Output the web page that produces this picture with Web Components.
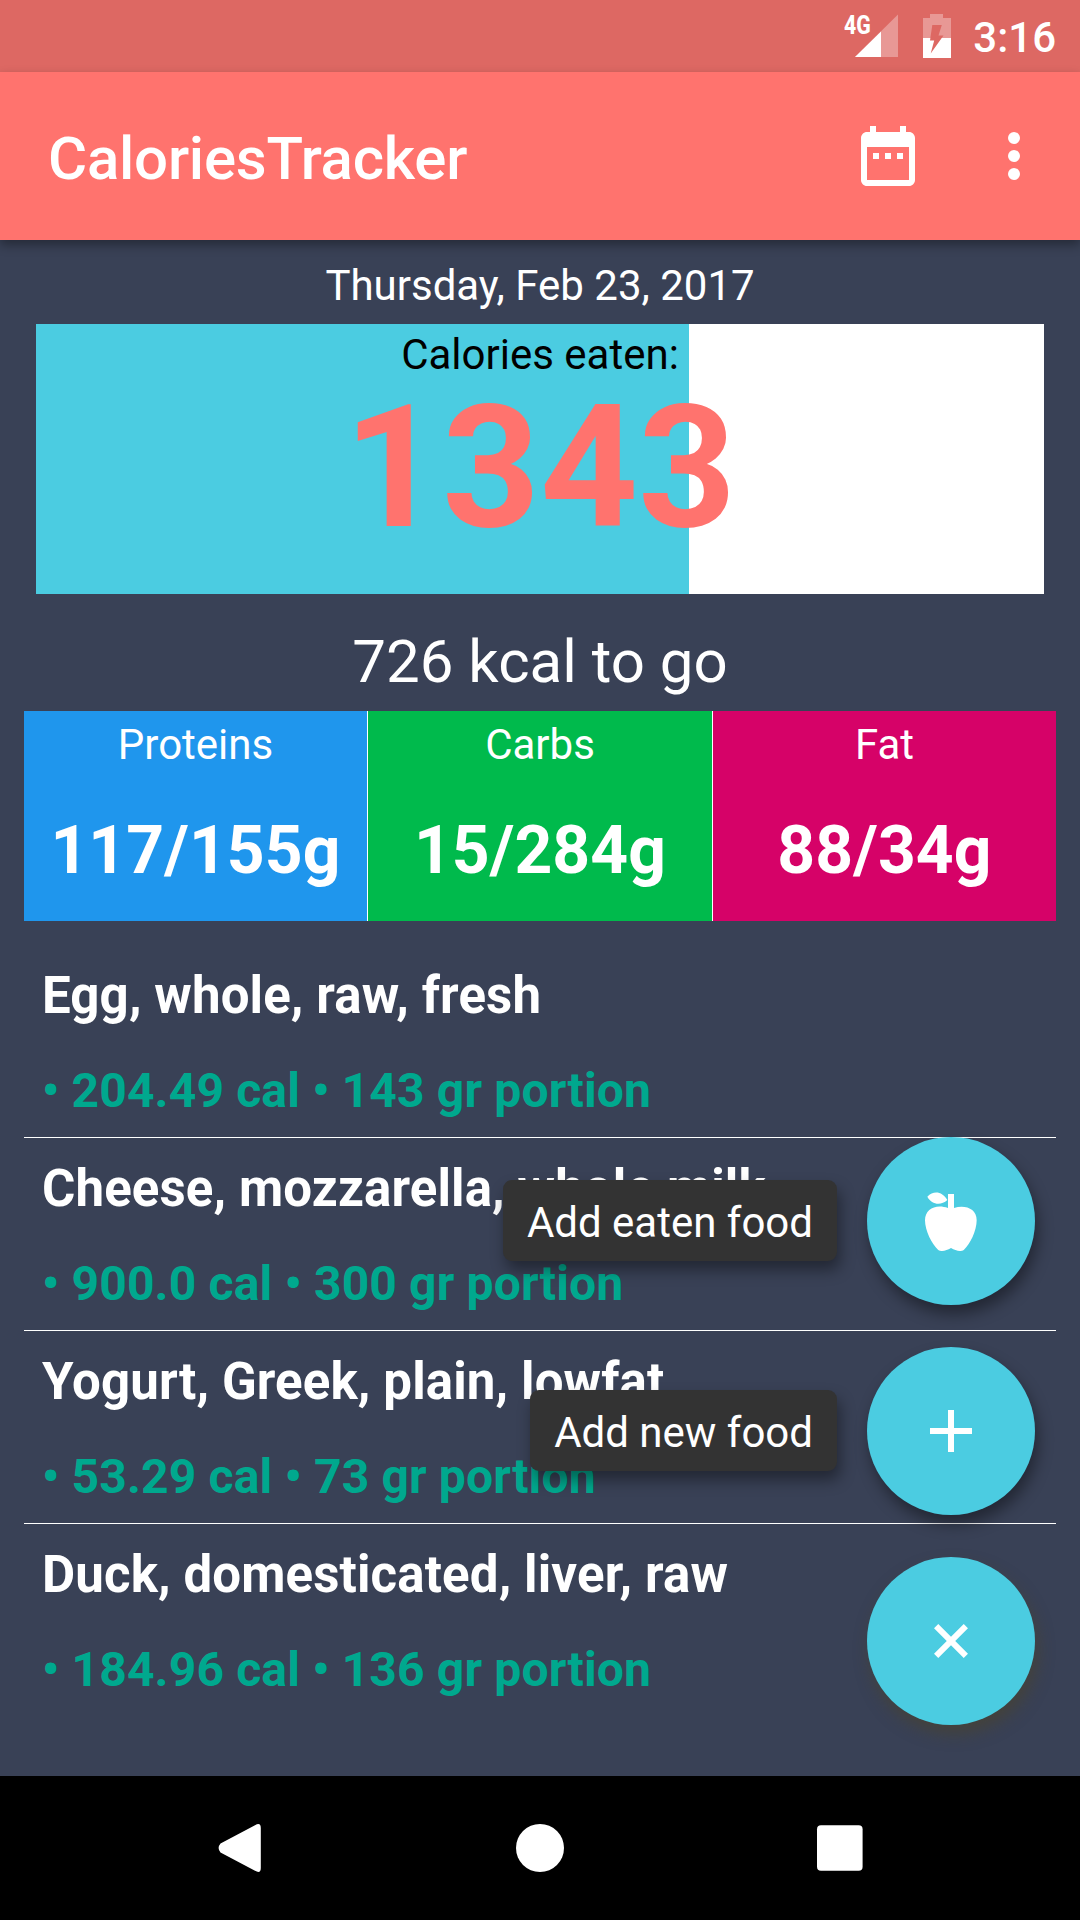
<!DOCTYPE html>
<html lang="en">
<head>
  <meta charset="utf-8">
  <title>CaloriesTracker</title>
  <style>
    body {
      margin: 0;
      background: #394156;
      color: #fff;
      font-family: Roboto, "Liberation Sans", sans-serif;
      font-size: 42px;
    }
  </style>
</head>
<body>
<calories-app></calories-app>

<script>
class StatusBar extends HTMLElement {
  connectedCallback() {
    const shadow = this.attachShadow({ mode: 'open' });
    shadow.innerHTML = `
      <style>
        :host {
          display: flex;
          justify-content: flex-end;
          height: 72px;
          box-sizing: border-box;
          padding-right: 24px;
          background: #dd6863;
        }
        svg { display: block; }
        .network {
          width: 26px;
          height: 20px;
          margin: 11px -16px 0 0;
          font-size: 25px;
          line-height: 29px;
          font-weight: 800;
          white-space: nowrap;
        }
        .network span {
          display: inline-block;
          transform: scaleX(0.85);
          transform-origin: 0 0;
        }
        .time {
          margin-left: 22px;
          padding-top: 2px;
          line-height: 72px;
          font-weight: 500;
        }
      </style>
      <div class="network"><span>4G</span></div>
      <svg width="44" height="72">
        <path d="M1 57L44 14.5V57z" fill="#fff" fill-opacity=".32"/>
        <path d="M1 57L27 31.5V57z" fill="#fff"/>
      </svg>
      <svg width="28" height="72" style="margin-left: 25px">
        <path d="M0 18h7v-4h13v4h8v20H0z" fill="#fff" fill-opacity=".32"/>
        <path d="M0 38h28v20H0z" fill="#fff"/>
        <path d="M9.300 25h9.500L15.500 35.500h5L7.700 53.500 11.200 40.500H7z" fill="#dd6863"/>
      </svg>
      <div class="time"><slot></slot></div>`;
  }
}

class AppBar extends HTMLElement {
  connectedCallback() {
    const shadow = this.attachShadow({ mode: 'open' });
    shadow.innerHTML = `
      <style>
        :host {
          display: flex;
          align-items: center;
          height: 168px;
          box-sizing: border-box;
          padding: 0 30px 0 48px;
          background: #ff736e;
          box-shadow: 0 5px 10px rgba(0, 0, 0, 0.35);
        }
        h1 {
          flex: 1;
          margin: 0;
          padding-top: 5px;
          font-size: 60px;
          font-weight: 500;
          letter-spacing: -0.24px;
        }
        svg {
          width: 72px;
          height: 72px;
          fill: #fff;
        }
        .date { margin-right: 54px; }
      </style>
      <h1><slot></slot></h1>
      <svg class="date" viewBox="0 0 24 24"><path d="M19 4h-1V2h-2v2H8V2H6v2H5c-1.110 0-1.990.9-1.990 2L3 20c0 1.100.89 2 2 2h14c1.100 0 2-.9 2-2V6c0-1.100-.9-2-2-2zm0 16H5V9h14v11zM9 11H7v2h2v-2zm4 0h-2v2h2v-2zm4 0h-2v2h2v-2z"/></svg>
      <svg viewBox="0 0 24 24"><circle cx="12" cy="6" r="2"/><circle cx="12" cy="12" r="2"/><circle cx="12" cy="18" r="2"/></svg>`;
  }
}

class CaloriesCard extends HTMLElement {
  connectedCallback() {
    const shadow = this.attachShadow({ mode: 'open' });
    shadow.innerHTML = `
      <style>
        :host {
          display: block;
          height: 270px;
          margin: 0 36px;
          text-align: center;
          background: linear-gradient(to right, #4bcce1 653px, #fff 653px);
        }
        .label {
          padding-top: 6px;
          line-height: 49px;
          color: #000;
        }
        .value {
          line-height: 171px;
          margin-top: 3px;
          font-size: 171px;
          font-weight: 700;
          color: #ff736e;
        }
      </style>
      <div class="label">Calories eaten:</div>
      <div class="value"><slot></slot></div>`;
  }
}

class MacroBox extends HTMLElement {
  connectedCallback() {
    const shadow = this.attachShadow({ mode: 'open' });
    shadow.innerHTML = `
      <style>
        :host {
          display: block;
          height: 210px;
          text-align: center;
          background: ${this.getAttribute('color')};
        }
        .label {
          padding-top: 9px;
          line-height: 49px;
        }
        .value {
          margin-top: 43px;
          line-height: 78px;
          font-size: 66px;
          font-weight: 700;
          letter-spacing: 0.1px;
        }
      </style>
      <div class="label">${this.getAttribute('label')}</div>
      <div class="value"><slot></slot></div>`;
  }
}

class FoodItem extends HTMLElement {
  connectedCallback() {
    const shadow = this.attachShadow({ mode: 'open' });
    shadow.innerHTML = `
      <style>
        :host {
          display: block;
          height: 192px;
          padding: 0 18px;
          border-bottom: 1px solid #fff;
          font-weight: 700;
          white-space: nowrap;
        }
        :host(:last-child) { border-bottom: 0; }
        .name {
          padding-top: 21px;
          line-height: 60px;
          font-size: 51px;
          letter-spacing: 0.13px;
        }
        .info {
          margin-top: 37px;
          line-height: 56px;
          font-size: 48px;
          letter-spacing: 0.16px;
          color: #00a88e;
        }
      </style>
      <div class="name"><slot></slot></div>
      <div class="info">• ${this.getAttribute('cal')} cal • ${this.getAttribute('portion')} gr portion</div>`;
  }
}

class FabButton extends HTMLElement {
  connectedCallback() {
    const label = this.getAttribute('label');
    const shadow = this.attachShadow({ mode: 'open' });
    shadow.innerHTML = `
      <style>
        :host {
          display: flex;
          align-items: center;
          justify-content: flex-end;
          gap: 30px;
          --fab-shadow: rgba(0, 0, 0, 0.4);
        }
        :host([main]) { --fab-shadow: rgba(77, 67, 33, 0.5); }
        .label {
          box-sizing: border-box;
          height: 81px;
          margin-bottom: 1px;
          padding: 18px 24px 0;
          line-height: 49px;
          border-radius: 9px;
          background: #333;
          box-shadow: 3px 9px 15px rgba(0, 0, 0, 0.4);
        }
        .circle {
          display: flex;
          align-items: center;
          justify-content: center;
          width: 168px;
          height: 168px;
          border-radius: 50%;
          background: #4bcce1;
          box-shadow: 3px 9px 15px var(--fab-shadow);
        }
      </style>
      ${label ? `<div class="label">${label}</div>` : ''}
      <div class="circle"><slot></slot></div>`;
  }
}

class NavBar extends HTMLElement {
  connectedCallback() {
    const shadow = this.attachShadow({ mode: 'open' });
    shadow.innerHTML = `
      <style>
        :host {
          display: flex;
          align-items: center;
          justify-content: center;
          gap: 204px;
          height: 144px;
          background: #000;
        }
        svg {
          width: 96px;
          height: 96px;
          fill: #fff;
        }
      </style>
      <svg viewBox="0 0 96 96"><path d="M28.500 43.500L63 25.200Q68.800 22 68.800 28V68Q68.800 74 63 70.800L28.500 52.500Q24.700 48 28.500 43.500z"/></svg>
      <svg viewBox="0 0 96 96"><circle cx="48" cy="48" r="24"/></svg>
      <svg viewBox="0 0 96 96"><rect x="25" y="25.200" width="45.600" height="45.600" rx="4"/></svg>`;
  }
}

class CaloriesApp extends HTMLElement {
  connectedCallback() {
    const shadow = this.attachShadow({ mode: 'open' });
    shadow.innerHTML = `
      <style>
        :host {
          display: flex;
          flex-direction: column;
          position: relative;
          width: 1080px;
          height: 1920px;
          overflow: hidden;
        }
        main { flex: 1; }
        .day {
          padding-top: 21px;
          height: 63px;
          line-height: 50px;
          text-align: center;
        }
        .left {
          padding-top: 33px;
          height: 84px;
          line-height: 70px;
          font-size: 60px;
          text-align: center;
        }
        .macros {
          display: grid;
          grid-template-columns: 343px 344px 343px;
          gap: 1px;
          margin: 0 24px;
          background: #fff;
        }
        .foods { margin: 24px 24px 0; }
        /* floating menu, lies over the food list */
        .fabs {
          position: absolute;
          right: 45px;
          bottom: 195px;
          display: flex;
          flex-direction: column;
          gap: 42px;
        }
        .fabs svg { fill: #fff; }
      </style>
      <status-bar>3:16</status-bar>
      <app-bar>CaloriesTracker</app-bar>
      <main>
        <div class="day">Thursday, Feb 23, 2017</div>
        <calories-card>1343</calories-card>
        <div class="left">726 kcal to go</div>
        <div class="macros">
          <macro-box label="Proteins" color="#1f96ed">117/155g</macro-box>
          <macro-box label="Carbs" color="#00ba4c">15/284g</macro-box>
          <macro-box label="Fat" color="#d60268">88/34g</macro-box>
        </div>
        <div class="foods">
          <food-item cal="204.49" portion="143">Egg, whole, raw, fresh</food-item>
          <food-item cal="900.0" portion="300">Cheese, mozzarella, whole milk</food-item>
          <food-item cal="53.29" portion="73">Yogurt, Greek, plain, lowfat</food-item>
          <food-item cal="184.96" portion="136">Duck, domesticated, liver, raw</food-item>
        </div>
      </main>
      <nav-bar></nav-bar>
      <div class="fabs">
        <fab-button label="Add eaten food">
          <svg width="72" height="78" viewBox="0 0 216 234"><path d="M99 36h18v42c34-10 68 2 68 37 0 32-20 72-38 88-12 9-25 2-39-5-14 7-27 14-39 5-18-16-39-56-39-88 0-35 34-50 69-37zM37 44c19-20 45-16 60 10-20 18-47 14-60-10z"/></svg>
        </fab-button>
        <fab-button label="Add new food">
          <svg width="42" height="42"><path d="M18 0h6v18h18v6H24v18h-6V24H0v-6h18z"/></svg>
        </fab-button>
        <fab-button main>
          <svg width="42" height="42"><path transform="rotate(45 21 21)" d="M18 0h6v18h18v6H24v18h-6V24H0v-6h18z"/></svg>
        </fab-button>
      </div>`;
  }
}

customElements.define('status-bar', StatusBar);
customElements.define('app-bar', AppBar);
customElements.define('calories-card', CaloriesCard);
customElements.define('macro-box', MacroBox);
customElements.define('food-item', FoodItem);
customElements.define('fab-button', FabButton);
customElements.define('nav-bar', NavBar);
customElements.define('calories-app', CaloriesApp);
</script>
</body>
</html>
